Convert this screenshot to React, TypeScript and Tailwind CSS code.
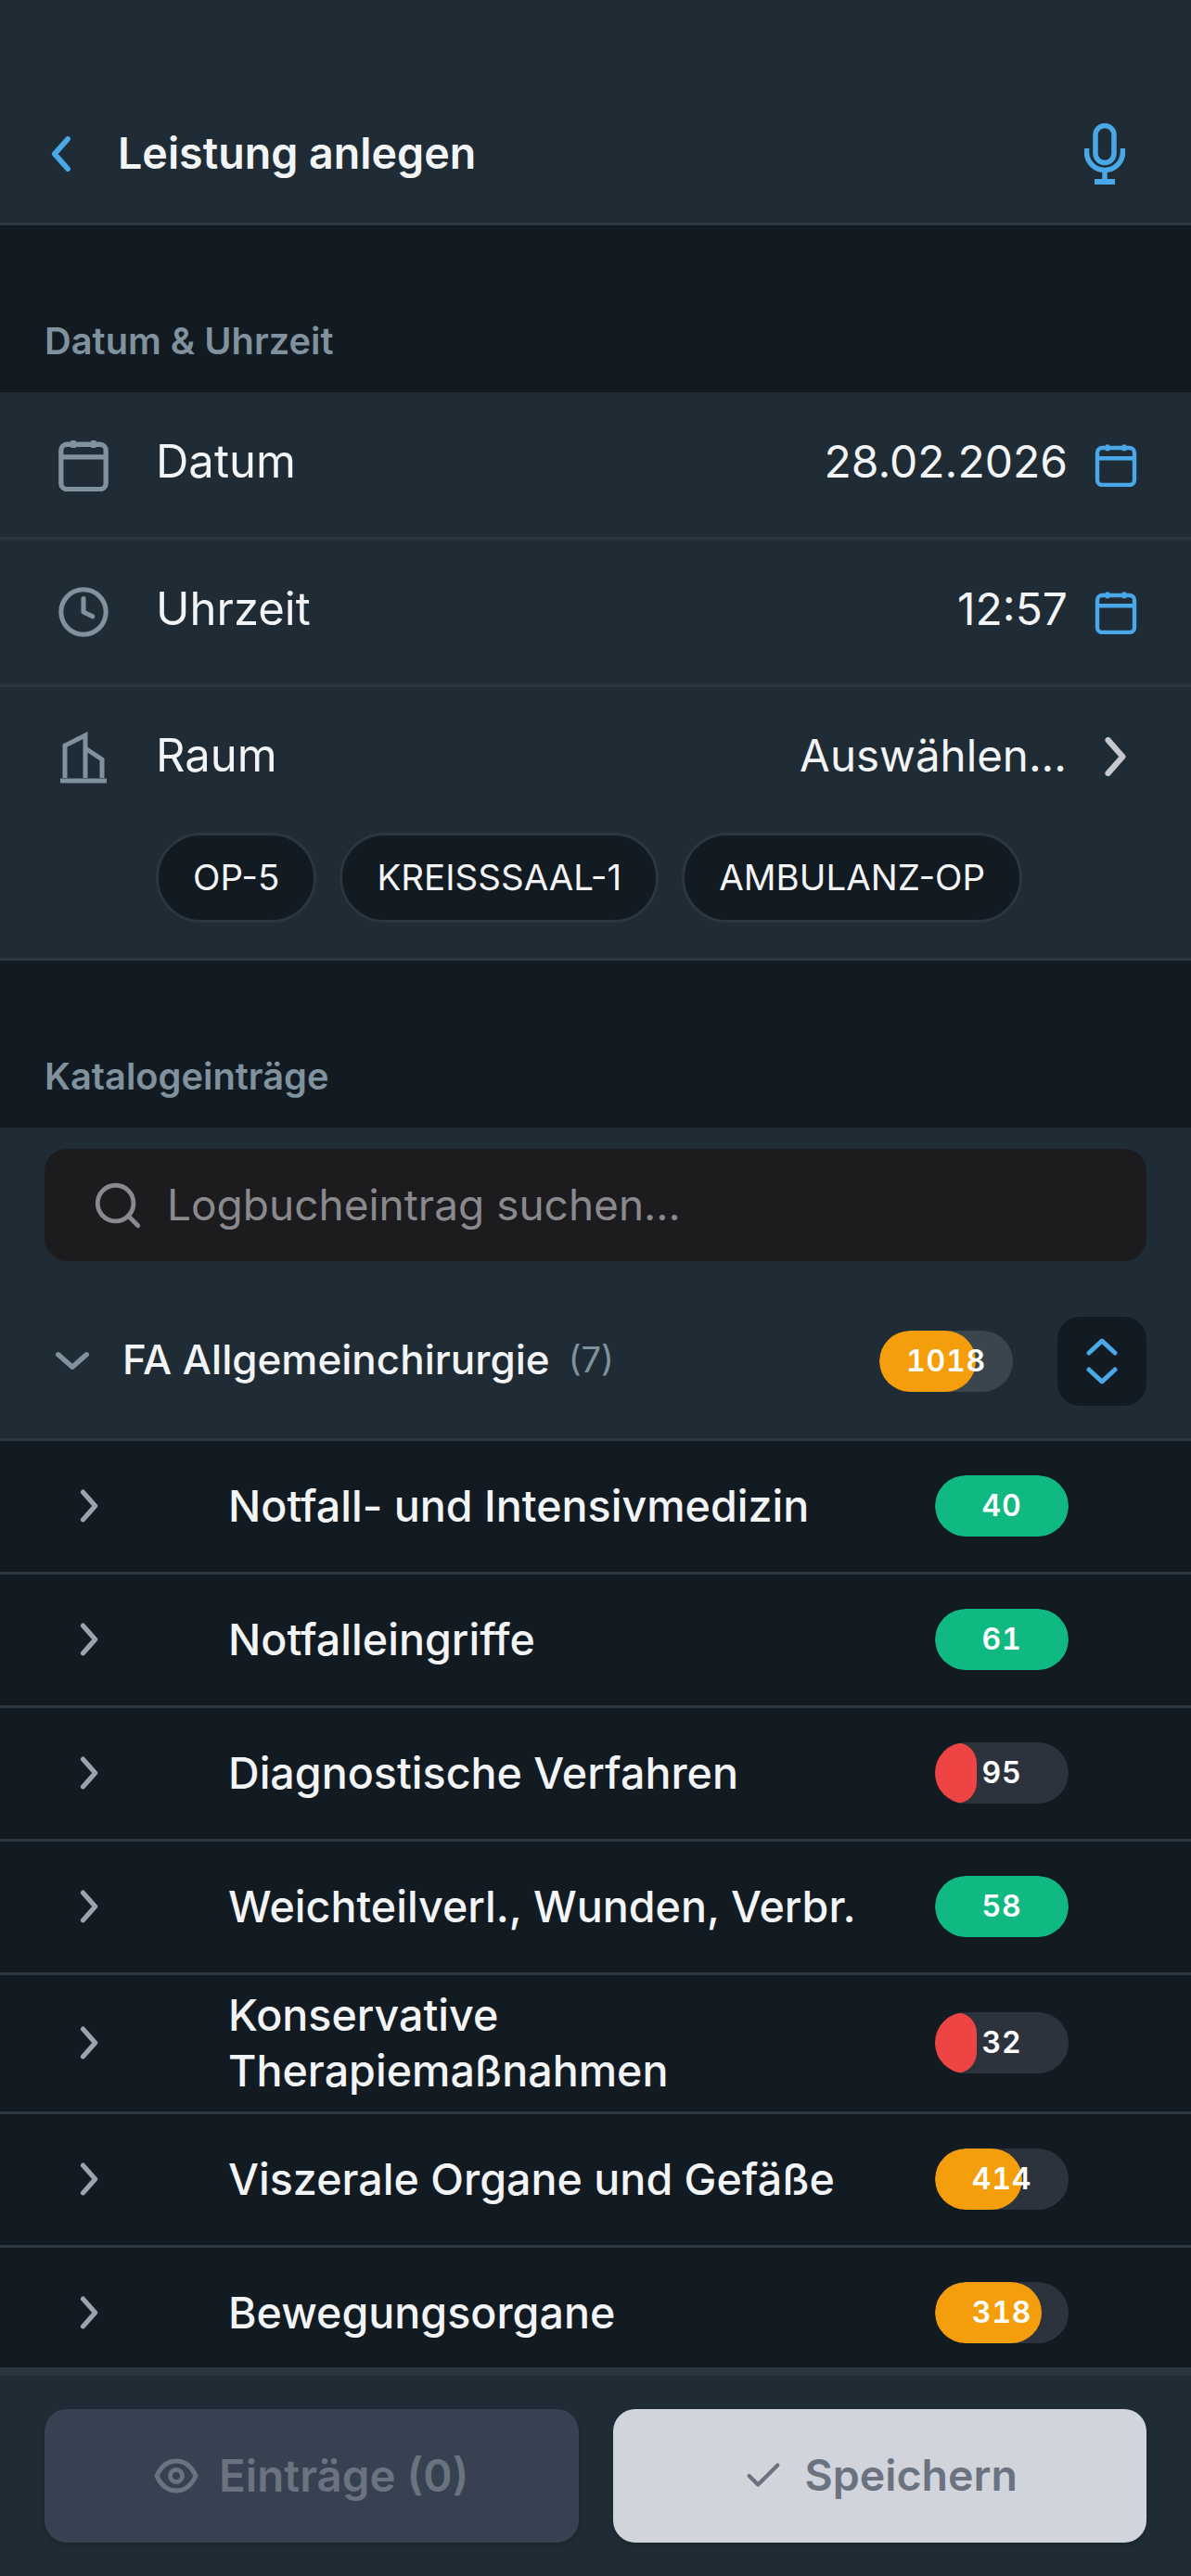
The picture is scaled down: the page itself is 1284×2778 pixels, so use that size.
import React from 'react';
import { Clock, Check, Search } from 'lucide-react';

const CalendarIcon = ({ className }: { className: string }) => (
    <svg viewBox="0 0 24 24" fill="none" stroke="currentColor" strokeWidth="2.2" className={className}>
        <rect x="2" y="3" width="20" height="20" rx="2.6" />
        <path d="M2 8.6h20M7.5 1.2v3.4M16.5 1.2v3.4" />
    </svg>
);

const BuildingIcon = () => (
    <svg viewBox="0 0 50 58" fill="none" stroke="currentColor" strokeWidth="5" className="h-[58px] w-[50px] shrink-0 text-[#7f929e]">
        <path d="M5 52V17L27 6v46M27 20l18 12v20M0 55h50" />
    </svg>
);

const MicIcon = () => (
    <svg viewBox="0 0 44 66" fill="none" stroke="#4aa8e8" strokeWidth="5.5" className="h-[66px] w-[44px]">
        <rect x="12" y="2.5" width="20" height="40" rx="10" />
        <path d="M2.5 27v4a19.5 19.5 0 0 0 39 0v-4M22 50.5V62" />
        <path d="M11 63h22" strokeWidth="6" />
    </svg>
);

const ChevronRight = ({ className }: { className: string }) => (
    <svg viewBox="0 0 24 40" fill="none" stroke="currentColor" strokeWidth="6" strokeLinecap="round" strokeLinejoin="round" className={className}>
        <path d="M4 3l15 17L4 37" />
    </svg>
);

const Pill = ({ value, percent, color, track = 'bg-[#2c333c]' }: { value: string; percent: number; color: string; track?: string }) => (
    <div className={`relative flex h-[66px] w-[144px] shrink-0 items-center justify-center overflow-hidden rounded-full ${track}`}>
        <div className={`absolute inset-y-0 left-0 rounded-full ${color}`} style={{ width: `${percent}%` }}></div>
        <span className="relative text-[32px] font-semibold tracking-[0.8px] text-white tabular-nums">{value}</span>
    </div>
);

const SectionLabel = ({ children, height }: { children: React.ReactNode; height: string }) => (
    <div className={`flex items-end px-[48px] pb-[31px] text-[39.8px] leading-[48px] font-semibold text-[#7f929e] ${height}`}>
        {children}
    </div>
);

const FormRow = ({ icon, label, value }: { icon: React.ReactNode; label: string; value: string }) => (
    <div className="flex h-[159px] items-center border-b-[3px] border-[#2a3640] pr-[57px] pl-[63px]">
        <div className="flex w-[54px] justify-center">{icon}</div>
        <span className="mb-[6px] ml-[51px] text-[49px] text-[#f3f4f6]">{label}</span>
        <span className="mb-[6px] ml-auto text-[48px] text-[#f3f4f6]">{value}</span>
        <CalendarIcon className="ml-[28px] size-[48px] text-[#4aa8e8]" />
    </div>
);

const items = [
    { title: 'Notfall- und Intensivmedizin', value: '40', percent: 100, color: 'bg-[#10b981]' },
    { title: 'Notfalleingriffe', value: '61', percent: 100, color: 'bg-[#10b981]' },
    { title: 'Diagnostische Verfahren', value: '95', percent: 31, color: 'bg-[#ef4444]' },
    { title: 'Weichteilverl., Wunden, Verbr.', value: '58', percent: 100, color: 'bg-[#10b981]' },
    { title: 'Konservative Therapiemaßnahmen', value: '32', percent: 31, color: 'bg-[#ef4444]', tall: true },
    { title: 'Viszerale Organe und Gefäße', value: '414', percent: 65, color: 'bg-[#f59e0b]' },
    { title: 'Bewegungsorgane', value: '318', percent: 80, color: 'bg-[#f59e0b]' },
];

const App = () => {
    return (
        <div className="flex h-[2778px] w-[1284px] flex-col overflow-hidden bg-[#121a22] font-['Inter',sans-serif]">
            <div className="flex h-[243px] shrink-0 items-end border-b-[3px] border-[#2a3640] bg-[#1f2c35]">
                <div className="flex h-[130px] w-full items-center pr-[71px] pb-[18px] pl-[52px]">
                    <ChevronRight className="h-[38px] w-[27px] rotate-180 text-[#4aa8e8]" />
                    <h1 className="ml-[48px] text-[46.6px] font-semibold text-[#f3f4f6]">Leistung anlegen</h1>
                    <div className="ml-auto"><MicIcon /></div>
                </div>
            </div>

            <SectionLabel height="h-[180px] shrink-0">Datum &amp; Uhrzeit</SectionLabel>

            <div className="shrink-0 border-b-[3px] border-[#2a3640] bg-[#1f2c35]">
                <FormRow icon={<CalendarIcon className="size-[58px] shrink-0 text-[#7f929e]" />} label="Datum" value="28.02.2026" />
                <FormRow icon={<Clock strokeWidth={2.1} className="size-[58px] shrink-0 text-[#7f929e]" />} label="Uhrzeit" value="12:57" />
                <div className="flex h-[150px] items-center pr-[68px] pl-[63px]">
                    <div className="flex w-[54px] justify-center"><BuildingIcon /></div>
                    <span className="mb-[2px] ml-[51px] text-[49px] text-[#f3f4f6]">Raum</span>
                    <span className="mb-[2px] ml-auto text-[47.5px] text-[#f3f4f6]">Auswählen...</span>
                    <ChevronRight className="ml-[40px] h-[42px] w-[26px] text-[#c7c9cc]" />
                </div>
                <div className="flex gap-[25px] pt-[7px] pb-[38px] pl-[168px]">
                    {['OP-5', 'KREISSSAAL-1', 'AMBULANZ-OP'].map((room) => (
                        <div key={room} className="flex h-[97px] items-center rounded-full border-[3px] border-[#2a3640] bg-[#121a22] px-[37px] text-[38.5px] text-[#f3f4f6]">
                            {room}
                        </div>
                    ))}
                </div>
            </div>

            <SectionLabel height="h-[180px] shrink-0">Katalogeinträge</SectionLabel>

            <div className="shrink-0 border-b-[3px] border-[#2a3640] bg-[#1f2c35] px-[48px] pt-[23px]">
                <div className="flex h-[121px] items-center rounded-[24px] bg-[#1c1c1e] pl-[50px]">
                    <Search strokeWidth={2} className="size-[58px] text-[#8a8a8e]" />
                    <span className="ml-[24px] text-[46px] text-[#8a8a8e]">Logbucheintrag suchen...</span>
                </div>
                <div className="flex h-[191px] items-center pt-[24px]">
                    <ChevronRight className="ml-[19px] h-[36px] w-[22px] rotate-90 text-[#7f929e]" />
                    <span className="mb-[3px] ml-[43px] text-[44px] font-[450] text-[#f3f4f6]">FA Allgemeinchirurgie</span>
                    <span className="mb-[3px] ml-[20px] text-[38px] text-[#7f929e]">(7)</span>
                    <div className="ml-auto">
                        <Pill value="1018" percent={72} color="bg-[#f59e0b]" track="bg-[#3a454d]" />
                    </div>
                    <div className="ml-[48px] flex size-[96px] items-center justify-center rounded-[24px] bg-[#121a22]">
                        <svg viewBox="0 0 34 50" fill="none" stroke="#4aa8e8" strokeWidth="5" strokeLinecap="round" strokeLinejoin="round" className="h-[50px] w-[34px]">
                            <path d="M3 16L17 3l14 13M3 34l14 13 14-13" />
                        </svg>
                    </div>
                </div>
            </div>

            <div className="min-h-0 flex-1 overflow-hidden">
                {items.map((item) => (
                    <div key={item.title} className={`flex items-center border-b-[3px] border-[#2a3640] pr-[132px] pb-[2px] pl-[86px] ${item.tall ? 'h-[150px]' : 'h-[144px]'}`}>
                        <ChevronRight className="h-[36px] w-[21px] shrink-0 text-[#9ca3af]" />
                        <span className={`ml-[139px] text-[46.6px] leading-[60px] font-[450] text-[#f3f4f6] ${item.tall ? 'w-[620px]' : ''}`}>{item.title}</span>
                        <div className="ml-auto"><Pill value={item.value} percent={item.percent} color={item.color} /></div>
                    </div>
                ))}
            </div>

            <div className="flex h-[225px] shrink-0 gap-[37px] border-t-[9px] border-[#2a3640] bg-[#1f2c35] px-[48px] pt-[36px]">
                <div className="flex h-[144px] flex-1 items-center justify-center gap-[22px] rounded-[24px] bg-[#374151] text-[47.5px] font-semibold text-[#6b7280] shadow-md">
                    <svg viewBox="0 0 48 48" fill="none" stroke="currentColor" strokeWidth="5" className="size-[48px]">
                        <path d="M3 24C8 13 15 8 24 8s16 5 21 16c-5 11-12 16-21 16S8 35 3 24z" />
                        <circle cx="24" cy="24" r="6.5" />
                    </svg>
                    Einträge (0)
                </div>
                <div className="flex h-[144px] flex-1 items-center justify-center gap-[22px] rounded-[24px] bg-[#d1d5db] text-[46.5px] font-semibold text-[#6b7280] shadow-md">
                    <Check strokeWidth={2.2} className="size-[46px]" />
                    Speichern
                </div>
            </div>
        </div>
    );
};

export default App;
